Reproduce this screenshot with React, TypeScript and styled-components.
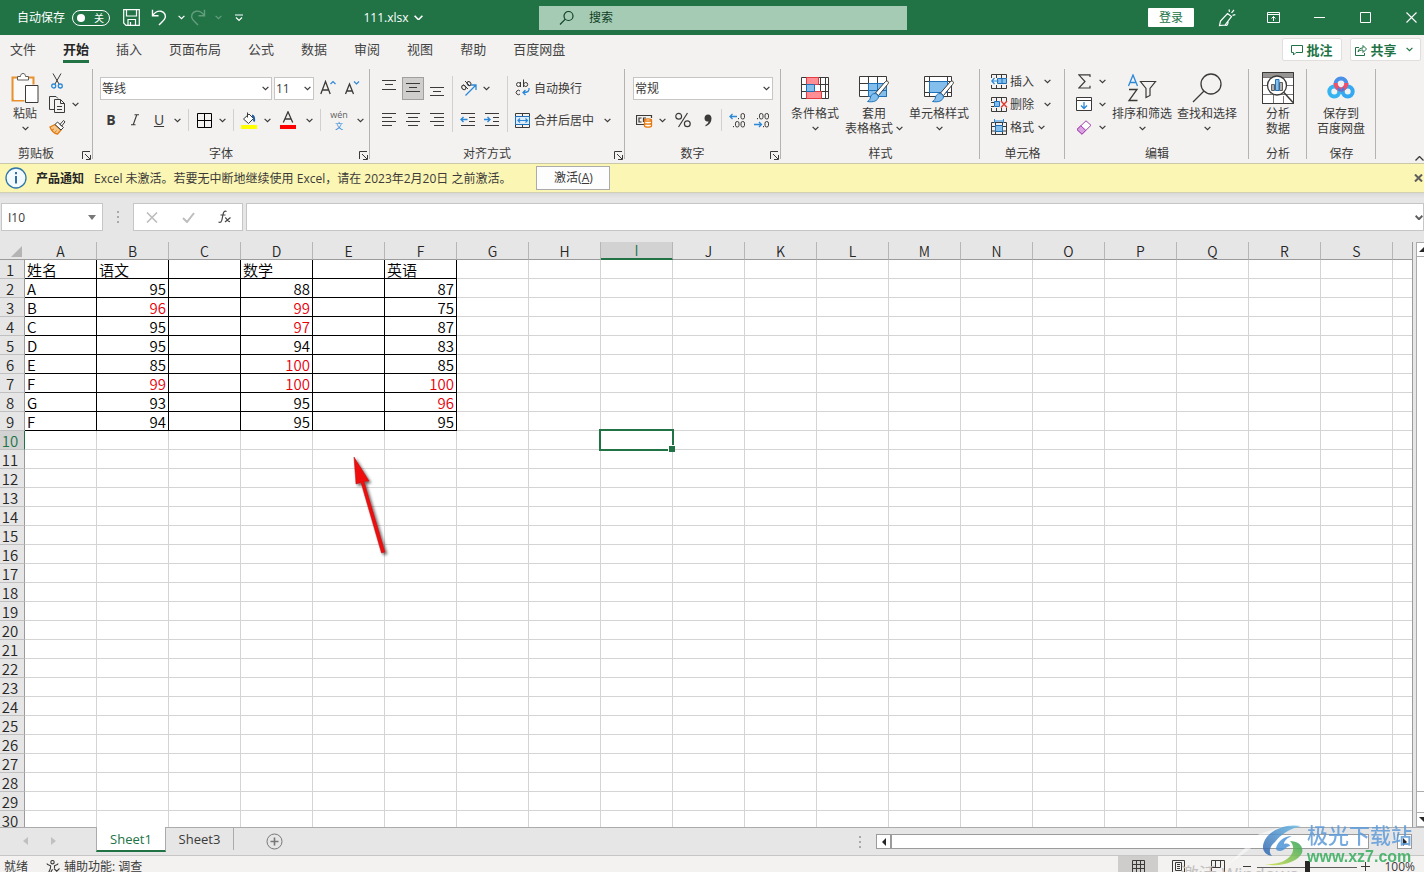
import React from "react";
import styled, { createGlobalStyle, css } from "styled-components";

const UI = `"Open Sans", "Noto Sans CJK SC", sans-serif`;
const GRID = `"Noto Sans CJK SC", sans-serif`;
const INK = "#3b3a39";
const GREEN = "#217346";
const BLUE = "#2b88d8";

const GlobalStyle = createGlobalStyle`
  * { box-sizing: border-box; }
  body { margin: 0; overflow: hidden; background: #e6e6e6; }
  button, input, select { font: inherit; color: inherit; margin: 0; padding: 0; }
  button { background: none; border: 0; cursor: pointer; }
`;

/* ---------- shell ---------- */
const Shell = styled.div`
  position: relative;
  display: flex;
  flex-direction: column;
  height: 100vh;
  overflow: hidden;
  font: 12px/16px ${UI};
  color: ${INK};
`;

const TitleBar = styled.header`
  display: flex;
  align-items: center;
  height: 35px;
  flex: none;
  background: ${GREEN};
  color: #fff;
`;
const TitleLeft = styled.div`
  display: flex;
  align-items: center;
  flex: 1 1 539px;
  padding-left: 17px;
`;
const AutoSave = styled.label`
  display: flex;
  align-items: center;
  gap: 7px;
`;
const ToggleShell = styled.span`
  display: flex;
  align-items: center;
  justify-content: space-between;
  width: 38px;
  height: 16px;
  padding: 0 5px 0 4px;
  border: 1px solid #fff;
  border-radius: 8px;
  font-size: 10px;
  line-height: 14px;
`;
const ToggleDot = styled.input`
  appearance: none;
  width: 8px;
  height: 8px;
  border-radius: 50%;
  background: #fff;
`;
const QuickTools = styled.div`
  display: flex;
  align-items: center;
  padding-left: 10px;
`;
const BarButton = styled.button<{ $w?: number; $dim?: boolean }>`
  display: flex;
  align-items: center;
  justify-content: center;
  flex: none;
  width: ${(p) => p.$w ?? 22}px;
  height: 24px;
  opacity: ${(p) => (p.$dim ? 0.3 : 1)};
`;
const FileName = styled.button`
  display: flex;
  align-items: center;
  gap: 5px;
  margin: 0 auto;
  padding-right: 5px;
`;
const SearchBox = styled.label`
  display: flex;
  align-items: center;
  gap: 14px;
  flex: 0 1 368px;
  height: 24px;
  padding-left: 20px;
  background: #a6cbb5;
  color: #0f4024;
`;
const SearchInput = styled.input`
  flex: 1;
  min-width: 0;
  border: 0;
  outline: 0;
  background: none;
  &::placeholder { color: #0f4024; opacity: 1; }
`;
const TitleRight = styled.div`
  display: flex;
  align-items: center;
  justify-content: flex-end;
  flex: 1 1 517px;
`;
const SignIn = styled.button`
  flex: none;
  width: 46px;
  height: 19px;
  margin-right: 10px;
  border-radius: 1px;
  background: #fff;
  color: ${GREEN};
`;
const CloseWindow = styled(BarButton)`
  width: 46px;
  margin-right: -10px;
`;

/* ---------- tabs ---------- */
const TabBar = styled.nav`
  display: flex;
  align-items: center;
  height: 29px;
  flex: none;
  padding: 0 3px 0 10px;
  background: #f3f2f1;
  font-size: 13px;
`;
const Tab = styled.button<{ $on?: boolean }>`
  height: 26px;
  margin-right: 27px;
  padding-top: 2px;
  border-bottom: 3px solid ${(p) => (p.$on ? GREEN : "transparent")};
  font-weight: ${(p) => (p.$on ? 700 : 400)};
  color: ${(p) => (p.$on ? "#262626" : "#444")};
  white-space: nowrap;
`;
const TabActions = styled.div`
  display: flex;
  gap: 8px;
  margin-left: auto;
`;
const ActionButton = styled.button<{ $w: number }>`
  display: flex;
  align-items: center;
  justify-content: center;
  gap: 3px;
  width: ${(p) => p.$w}px;
  height: 23px;
  background: #fff;
  border: 1px solid #e1dfdd;
  border-radius: 2px;
  color: ${GREEN};
  font-weight: 700;
  white-space: nowrap;
`;

/* ---------- ribbon ---------- */
const Ribbon = styled.section`
  position: relative;
  display: flex;
  height: 100px;
  flex: none;
  background: #f3f2f1;
  border-bottom: 1px solid #c9c9a8;
`;
const Group = styled.div<{ $w: number }>`
  display: flex;
  flex-direction: column;
  flex: none;
  width: ${(p) => p.$w}px;
  background: linear-gradient(#b5b3b1, #b5b3b1) right 5px / 1px 90px no-repeat;
`;
const GroupBody = styled.div<{ $pad: number }>`
  display: flex;
  align-items: center;
  height: 80px;
  padding-left: ${(p) => p.$pad}px;
`;
const GroupFoot = styled.div`
  display: flex;
  align-items: center;
  height: 18px;
`;
const GroupName = styled.span`
  flex: 1;
  padding-top: 2px;
  text-align: center;
`;
const Launcher = styled.button`
  width: 21px;
  height: 18px;
  padding: 4px 0 0 7px;
  display: block;
`;
const Stack = styled.div`
  display: flex;
  flex-direction: column;
`;
const Line = styled.div<{ $h?: number; $pad?: number }>`
  display: flex;
  align-items: center;
  height: ${(p) => p.$h ?? 32}px;
  padding-left: ${(p) => p.$pad ?? 0}px;
`;
const AlignGrid = styled.div`
  display: grid;
  grid-template-columns: repeat(3, 24px);
  grid-auto-rows: 32px;
  align-items: center;
`;
const Tool = styled.button<{ $on?: boolean; $w?: number }>`
  display: flex;
  align-items: center;
  justify-content: center;
  flex: none;
  width: ${(p) => p.$w ?? 24}px;
  height: 24px;
  font-size: 14px;
  ${(p) =>
    p.$on &&
    css`
      width: 22px;
      height: 23px;
      margin: 0 1px;
      background: #d0cecc;
      border: 1px solid #a19f9d;
    `}
`;
const Drop = styled.button<{ $gap?: number }>`
  display: flex;
  align-items: center;
  justify-content: center;
  flex: none;
  width: 12px;
  height: 20px;
  margin-left: ${(p) => p.$gap ?? 0}px;
`;
const Rule = styled.i<{ $h?: number; $l?: number }>`
  flex: none;
  width: 1px;
  height: ${(p) => p.$h ?? 22}px;
  margin: 0 3px 0 ${(p) => p.$l ?? 5}px;
  background: #d2d0ce;
`;
const SelectBox = styled.span<{ $w: number; $gap?: number }>`
  display: flex;
  align-items: center;
  width: ${(p) => p.$w}px;
  height: 23px;
  margin-right: ${(p) => p.$gap ?? 0}px;
  padding: 1px 2px 0 1px;
  background: #fff;
  border: 1px solid #c8c6c4;
`;
const NativeSelect = styled.select`
  appearance: none;
  flex: 1;
  min-width: 0;
  border: 0;
  outline: 0;
  background: none;
`;
const LabelTool = styled.button<{ $gap?: number }>`
  display: flex;
  align-items: center;
  gap: ${(p) => p.$gap ?? 3}px;
  height: 23px;
  white-space: nowrap;
`;
const ToolText = styled.span`
  padding-top: 2px;
`;
const BigTool = styled.button<{ $w: number }>`
  display: flex;
  flex-direction: column;
  align-items: center;
  flex: none;
  width: ${(p) => p.$w}px;
  height: 64px;
  line-height: 15px;
  white-space: nowrap;
`;
const BigIcon = styled.span`
  display: flex;
  align-items: center;
  justify-content: center;
  height: 32px;
  margin-bottom: 2px;
`;
const BigLine = styled.span`
  display: flex;
  align-items: center;
  gap: 3px;
  height: 15px;
`;
const Collapse = styled.button`
  margin-left: auto;
  align-self: flex-end;
  width: 9px;
  height: 14px;
  overflow: hidden;
`;
const PinyinMark = styled.span`
  display: flex;
  flex-direction: column;
  align-items: center;
  font-size: 9px;
  line-height: 11px;
  color: #605e5c;
`;
const PinyinHan = styled.span`
  font-size: 8px;
  font-family: ${GRID};
  color: ${BLUE};
`;

/* ---------- notice ---------- */
const Notice = styled.div`
  display: flex;
  align-items: center;
  height: 29px;
  flex: none;
  padding-left: 5px;
  background: #fbf6b4;
  border-bottom: 1px solid #d3d1b4;
  white-space: nowrap;
`;
const NoticeTitle = styled.strong`
  margin: 0 10px 0 9px;
  padding-top: 1px;
  color: #262626;
`;
const NoticeText = styled.span`
  padding-top: 1px;
`;
const Activate = styled.button`
  width: 74px;
  height: 24px;
  margin-left: 25px;
  background: #fdfdfd;
  border: 1px solid #ababab;
`;
const NoticeClose = styled.button`
  display: flex;
  margin-left: auto;
  padding-right: 1px;
`;

/* ---------- formula row ---------- */
const FormulaRow = styled.div`
  display: flex;
  flex: none;
  height: 49px;
  padding: 10px 0 0 1px;
  background: linear-gradient(#d8d8d8, #e6e6e6 5px);
`;
const Field = styled.div<{ $w?: number }>`
  display: flex;
  align-items: center;
  ${(p) => (p.$w ? `width: ${p.$w}px;` : "flex: 1; min-width: 0;")}
  height: 28px;
  background: #fff;
  border: 1px solid #c6c6c6;
`;
const FieldInput = styled.input`
  flex: 1;
  min-width: 0;
  height: 24px;
  padding-left: 6px;
  border: 0;
  outline: 0;
  background: none;
`;
const FieldButton = styled.button<{ $w: number }>`
  display: flex;
  align-items: center;
  justify-content: center;
  width: ${(p) => p.$w}px;
  height: 26px;
`;
const Grip = styled.span<{ $w: number }>`
  display: flex;
  align-items: center;
  justify-content: center;
  width: ${(p) => p.$w}px;
  height: 28px;
`;

/* ---------- grid ---------- */
const Work = styled.main`
  position: relative;
  display: flex;
  flex: 1;
  min-height: 0;
`;
const SheetArea = styled.div`
  flex: 1;
  min-width: 0;
  overflow: hidden;
  border-right: 1px solid #9b9b9b;
  background: #fff;
`;
const Sheet = styled.table`
  width: 100%;
  table-layout: fixed;
  border-collapse: separate;
  border-spacing: 0;
  font: 15px/16px ${GRID};
  font-weight: 350;
  color: #000;
  th:last-child,
  td:last-child {
    border-right: 0;
  }
`;
const Corner = styled.td`
  height: 18px;
  padding: 0;
  background: #e6e6e6;
  border-bottom: 1px solid #9b9b9b;
  vertical-align: bottom;
  text-align: right;
  line-height: 0;
`;
const ColHead = styled.th<{ $on?: boolean }>`
  height: 18px;
  padding: 1px 0 0;
  font-weight: inherit;
  font-size: 14px;
  line-height: 15px;
  background: ${(p) => (p.$on ? "#d2d2d2" : "#e6e6e6")};
  color: ${(p) => (p.$on ? GREEN : "#262626")};
  border-right: 1px solid #b6b6b6;
  border-bottom: ${(p) => (p.$on ? `2px solid ${GREEN}` : "1px solid #9b9b9b")};
`;
const RowHead = styled.th<{ $on?: boolean }>`
  height: 19px;
  padding: 2px 4px 0 0;
  text-align: center;
  font-weight: inherit;
  background: ${(p) => (p.$on ? "#d2d2d2" : "#e6e6e6")};
  color: ${(p) => (p.$on ? GREEN : "#262626")};
  border-right: 1px solid ${(p) => (p.$on ? GREEN : "#9b9b9b")};
  border-bottom: 1px solid #c0c0c0;
`;
const Cell = styled.td<{ $box?: boolean; $num?: boolean; $hot?: boolean }>`
  position: relative;
  height: 19px;
  padding: 2px 2px 0;
  text-align: ${(p) => (p.$num ? "right" : "left")};
  color: ${(p) => (p.$hot ? "#e8000b" : "#000")};
  border-right: 1px solid ${(p) => (p.$box ? "#000" : "#d4d4d4")};
  border-bottom: 1px solid ${(p) => (p.$box ? "#000" : "#d4d4d4")};
  white-space: nowrap;
`;
const Selection = styled.div`
  position: absolute;
  inset: -2px;
  z-index: 1;
  border: 2px solid ${GREEN};
  &::after {
    content: "";
    position: absolute;
    right: -3px;
    bottom: -3px;
    width: 6px;
    height: 6px;
    background: ${GREEN};
    border: solid #fff;
    border-width: 1px 0 0 1px;
  }
`;
const VScroll = styled.div`
  display: flex;
  flex-direction: column;
  width: 8px;
  margin-left: 3px;
  border-left: 1px solid #ababab;
  background: #fff;
`;
const VArrow = styled.button`
  display: flex;
  align-items: center;
  justify-content: flex-end;
  height: 15px;
  overflow: hidden;
  background: #fff;
  border-top: 1px solid #ababab;
  border-bottom: 1px solid #ababab;
`;
const VTrack = styled.div`
  flex: 1;
  margin-bottom: 20px;
  border-bottom: 1px solid #ababab;
`;
const Arrow = styled.svg`
  position: absolute;
  left: 346px;
  top: 211px;
  pointer-events: none;
`;

/* ---------- bottom bars ---------- */
const SheetBar = styled.div`
  display: flex;
  align-items: flex-start;
  height: 28px;
  flex: none;
  background: #e6e6e6;
  border-top: 1px solid #ababab;
  font-size: 13px;
`;
const NavArrows = styled.div`
  display: flex;
  justify-content: center;
  gap: 22px;
  width: 96px;
  padding: 9px 16px 0 0;
`;
const SheetTab = styled.button<{ $on?: boolean }>`
  width: ${(p) => (p.$on ? 70 : 68)}px;
  height: ${(p) => (p.$on ? 25 : 22)}px;
  margin-top: ${(p) => (p.$on ? -1 : 0)}px;
  border-right: 1px solid #ababab;
  ${(p) =>
    p.$on &&
    css`
      background: #fff;
      color: ${GREEN};
      border-left: 1px solid #ababab;
      border-bottom: 2px solid ${GREEN};
    `}
`;
const AddSheet = styled.button`
  display: flex;
  margin: 5px 0 0 32px;
`;
const HScroll = styled.div`
  display: flex;
  justify-content: space-between;
  width: 536px;
  height: 15px;
  margin: 6px 12px 0 15px;
`;
const BarGrip = styled.div`
  margin: 7px 0 0 auto;
`;
const HBox = styled.button<{ $w: number }>`
  display: flex;
  align-items: center;
  justify-content: center;
  width: ${(p) => p.$w}px;
  height: 15px;
  background: #fff;
  border: 1px solid #9b9b9b;
`;
const HThumb = styled.div`
  flex: 1;
  margin: 0 28px 0 0;
  background: #fff;
  border: 1px solid #9b9b9b;
`;
const StatusBar = styled.footer`
  position: relative;
  display: flex;
  align-items: flex-start;
  height: 17px;
  flex: none;
  padding: 0 9px 0 4px;
  background: #f3f2f1;
  border-top: 1px solid #c8c6c4;
  line-height: 22px;
  white-space: nowrap;
`;
const A11y = styled.button`
  display: flex;
  align-items: center;
  gap: 3px;
  height: 22px;
  margin-left: 18px;
`;
const ViewButton = styled.button<{ $on?: boolean }>`
  display: flex;
  align-items: center;
  justify-content: center;
  width: 40px;
  height: 20px;
  background: ${(p) => (p.$on ? "#cfcdcb" : "none")};
`;
const Views = styled.div`
  display: flex;
  margin-left: auto;
`;
const ZoomPart = styled.div`
  position: relative;
  z-index: 3;
  display: flex;
  align-items: center;
  height: 22px;
  margin-left: 5px;
`;
const Range = styled.input`
  appearance: none;
  width: 100px;
  height: 12px;
  margin: 0 4px 0 5px;
  background: linear-gradient(#605e5c, #605e5c) center / 100% 1px no-repeat;
  &::-webkit-slider-thumb {
    appearance: none;
    width: 5px;
    height: 12px;
    background: #262626;
  }
`;
const ZoomText = styled.button`
  width: 34px;
  margin-left: 11px;
  text-align: right;
`;
const OsMark = styled.div`
  position: absolute;
  top: 6px;
  right: 126px;
  font-size: 18px;
  line-height: 24px;
  color: #c2c0be;
`;
const SiteMark = styled.div`
  position: absolute;
  right: 11px;
  bottom: 6px;
  z-index: 5;
  display: flex;
  align-items: center;
  opacity: 0.85;
  pointer-events: none;
`;
const SiteText = styled.div`
  display: flex;
  flex-direction: column;
  width: 106px;
  font-family: "Liberation Sans", "Noto Sans CJK SC", sans-serif;
  white-space: nowrap;
`;
const SiteName = styled.span`
  font-size: 21px;
  line-height: 24px;
  font-weight: 500;
  color: #5f9bd8;
`;
const SiteUrl = styled.span`
  font-size: 16px;
  line-height: 17px;
  color: #35ad5c;
  font-weight: 700;
`;

/* ---------- icons ---------- */
type IconProps = { w: number; h: number; children: React.ReactNode; c?: string; sw?: number };
const IconSvg = styled.svg`
  flex: none;
`;
const Ico = ({ w, h, children, c = INK, sw = 1 }: IconProps) => (
  <IconSvg width={w} height={h} viewBox={`0 0 ${w} ${h}`} fill="none" stroke={c} strokeWidth={sw} aria-hidden="true">
    {children}
  </IconSvg>
);
const Chevron = ({ w = 7, c = INK, sw = 1.2 }: { w?: number; c?: string; sw?: number }) => (
  <Ico w={w} h={5} c={c} sw={sw}>
    <path d={`M.6 .8 L${w / 2} ${w / 2 + 0.2} L${w - 0.6} .8`} />
  </Ico>
);
const Bars = ({ rows }: { rows: [number, number, number][] }) => (
  <Ico w={16} h={18}>
    {rows.map(([a, b, y]) => (
      <path key={y} d={`M${a} ${y}.5H${b}`} />
    ))}
  </Ico>
);
const Pointer = ({ d, c = "#262626", w = 6, h = 8 }: { d: string; c?: string; w?: number; h?: number }) => (
  <Ico w={w} h={h} c="none">
    <path d={d} fill={c} />
  </Ico>
);
const Brush = () => (
  <>
    <path d="M30 8.500c.8.8.4 2-.5 3L20.500 22.500l-3-2.500L27 9c1-1 2-1.300 3-.5z" fill="#fff" stroke={INK} />
    <path d="M17 20.500c2 .5 3.500 2 3.500 3.500-1 4-5 5.500-11 4.500 2.500-1.500 2.500-2.500 3.200-5 .8-2 2.300-3 4.300-3z" fill="#83beec" stroke="#1e70b8" />
  </>
);
const Dots = () => (
  <Ico w={2} h={12} c="none">
    <path d="M0 0h2v2H0zM0 5h2v2H0zM0 10h2v2H0z" fill="#a8a8a8" />
  </Ico>
);
const Launch = () => (
  <Ico w={9} h={9}>
    <path d="M8 .5H.5V8M3 3l5 5M8.500 4v4.500H4" />
  </Ico>
);

const SaveIcon = () => (
  <Ico w={17} h={17} c="#fff" sw={1.2}>
    <path d="M.7.7h15.600v15.600H3L.7 14zM3.500.7V7h10V.7M5 16.300v-5.800h7.500v5.800M7.500 16v-3" />
  </Ico>
);
const UndoIcon = () => (
  <Ico w={16} h={17} c="#fff" sw={1.4}>
    <path d="M1.500.8v6h6M1.700 6.600C4 3 7 1.700 10 2.200c4 .8 5.500 5 3.500 8-.8 1.200-3.500 3.800-5.500 5.800" />
  </Ico>
);
const RedoIcon = () => (
  <Ico w={16} h={17} c="#fff" sw={1.4}>
    <path d="M14.500.8v6h-6M14.300 6.600C12 3 9 1.700 6 2.200c-4 .8-5.500 5-3.500 8 .8 1.200 3.500 3.800 5.500 5.800" />
  </Ico>
);
const PasteIcon = () => (
  <Ico w={28} h={31}>
    <path d="M6.500 4.500h-5v23h12M18 4.500h4.500v7" stroke="#e8912d" strokeWidth="2" />
    <path d="M3 6h18v21H3z" fill="#fbfaf9" stroke="none" />
    <path d="M6.500 7V3.500h3C9.500 1.500 10.500.5 12 .5s2.500 1 2.500 3h3V7z" fill="#fff" stroke="#605e5c" />
    <path d="M14.500 12.500h12.500v17H14.500z" fill="#fff" />
  </Ico>
);
const CutIcon = () => (
  <Ico w={12} h={16}>
    <path d="M2 .5l6 10.500M10 .5L4 11" />
    <circle cx="2.700" cy="13" r="2" stroke={BLUE} strokeWidth="1.300" />
    <circle cx="9.300" cy="13" r="2" stroke={BLUE} strokeWidth="1.300" />
  </Ico>
);
const CopyIcon = () => (
  <Ico w={17} h={17}>
    <path d="M5 13.500H.5V.5H7l2 2M5.500 3.500h6l4 4v9h-10zM11.500 3.500v4h4M8 10.500h5M8 13.500h5" />
  </Ico>
);
const PainterIcon = () => (
  <Ico w={17} h={16}>
    <path d="M1 8l5-2.500 6 5.500-3.500 4C5 14.500 2.500 12 1 8z" fill="#f6c78b" stroke="#e07b14" strokeWidth="1.300" />
    <path d="M5 10l-2 1M7.500 11.500L6 13.500" stroke="#e07b14" />
    <path d="M6 5.500L8.500 3l6 5.500-2.500 2.500zM11 5.500l3.500-4 1.500 1.300L12.700 7z" fill="#fff" />
  </Ico>
);
const BorderIcon = () => (
  <Ico w={15} h={15} c="#000">
    <path d="M.5.5h14v14H.5zM7.500.5v14M.5 7.500h14" />
  </Ico>
);
const FillIcon = () => (
  <Ico w={16} h={17}>
    <path d="M6.500.5v5M2.500 7l5.500-5 4.500 4.500L7.500 11.500z" fill="#fff" />
    <path d="M11 3.500c2 .5 2.500 2.500 2 6" stroke="#1e5fa8" strokeWidth="2" />
    <path d="M0 13h16v4H0z" fill="#ffff00" stroke="none" />
  </Ico>
);
const FontColor = () => (
  <Ico w={16} h={18}>
    <path d="M3.300 11.500L8 .8l4.700 10.700M4.800 8h6.400" strokeWidth="1.300" />
    <path d="M0 14h16v4H0z" fill="#ff0000" stroke="none" />
  </Ico>
);
const SizeIcon = ({ up }: { up?: boolean }) => (
  <Ico w={16} h={16}>
    <path d={up ? "M.8 14L5.500 1.500 10.200 14M2.300 10h6.400" : "M1.500 14L5.500 4l4 10M2.800 11h5.400"} strokeWidth="1.300" />
    <path d={up ? "M10.500 4L13 1.500 15.500 4" : "M10 1.500L12.500 4 15 1.500"} stroke={BLUE} strokeWidth="1.200" />
  </Ico>
);
const OrientIcon = () => (
  <Ico w={17} h={16}>
    <ellipse cx="3.800" cy="7.500" rx="1.800" ry="2.300" transform="rotate(-45 3.800 7.500)" />
    <path d="M3.500 4.500l4.500 4.500M5 1l5 5" />
    <ellipse cx="9" cy="3.600" rx="1.700" ry="2.200" transform="rotate(-45 9 3.600)" />
    <path d="M5.500 15.500L15.500 5.500M11 5h5v5" stroke={BLUE} strokeWidth="1.300" />
  </Ico>
);
const IndentIcon = ({ out }: { out?: boolean }) => (
  <Ico w={16} h={14}>
    <path d="M1 .5h14M9 4.500h6M9 8.500h6M1 12.500h14" />
    <path d={out ? "M7.500 6.500H1M3.500 4L1 6.500 3.500 9" : "M0 6.500h6M3.500 4L6 6.500 3.500 9"} stroke={BLUE} strokeWidth="1.400" />
  </Ico>
);
const WrapIcon = () => (
  <Ico w={16} h={18}>
    <circle cx="3.500" cy="5.500" r="2" />
    <path d="M5.500 3v5M8.500.5V8M5 12a2.200 2.200 0 1 0 0 3" />
    <circle cx="10.700" cy="5.500" r="2" />
    <path d="M14 9c.5 3-1 4.500-6 4.500M10.500 11L8 13.500l2.500 2.500" stroke={BLUE} strokeWidth="1.300" />
  </Ico>
);
const MergeIcon = () => (
  <Ico w={16} h={15}>
    <path d="M.5.5h14v14H.5zM7.500.5v3M7.500 11.500v3" />
    <path d="M.5 3.500h14v8H.5z" fill="#deecf9" stroke="#1e70b8" />
    <path d="M3 7.500h9.500M5 5.500L3 7.500l2 2M10.500 5.500l2 2-2 2" stroke={BLUE} strokeWidth="1.200" />
  </Ico>
);
const CurrencyIcon = () => (
  <Ico w={17} h={15}>
    <path d="M8 11.500H.5v-9h15V5M5.500 5H3v4h2.500M7.500 9V5H10" strokeWidth="1.200" />
    <path d="M8.500 7c0-1.500 7-1.500 7 0v6c0 1.500-7 1.500-7 0zM8.500 7c0 1.500 7 1.500 7 0M8.500 10c0 1.500 7 1.500 7 0" fill="#fff" stroke="#e8780c" strokeWidth="1.300" />
  </Ico>
);
const PercentIcon = () => (
  <Ico w={16} h={16} sw={1.2}>
    <circle cx="3.700" cy="4.200" r="2.900" />
    <circle cx="12.300" cy="11.800" r="2.900" />
    <path d="M12.500 1L3.500 15" />
  </Ico>
);
const CommaIcon = () => (
  <Ico w={8} h={13} c="none">
    <path d="M4 .5c2.500 0 3.500 2 3.500 4C7.500 8 5.500 11 1.500 12.500V11C3.500 10 4.500 8.800 4.500 7.300 2 8 .5 6.500.5 4.200.5 2 2 .5 4 .5z" fill={INK} />
  </Ico>
);
const DecimalIcon = ({ more }: { more?: boolean }) => (
  <Ico w={17} h={16}>
    {more ? (
      <>
        <path d="M8 4.500H1M3.500 2L1 4.500 3.500 7" stroke={BLUE} strokeWidth="1.300" />
        <path d="M9.500 6v1.200M4.500 14v1.200" />
        <rect x="12" y="1.500" width="3.500" height="5.500" rx="1.700" />
        <rect x="6.500" y="9.500" width="3.500" height="5.500" rx="1.700" />
        <rect x="12" y="9.500" width="3.500" height="5.500" rx="1.700" />
      </>
    ) : (
      <>
        <path d="M1 12.500h7.500M6 10l2.500 2.500L6 15" stroke={BLUE} strokeWidth="1.300" />
        <path d="M4.500 6v1.200M10.500 14v1.200" />
        <rect x="6.500" y="1.500" width="3.500" height="5.500" rx="1.700" />
        <rect x="12" y="1.500" width="3.500" height="5.500" rx="1.700" />
        <rect x="12" y="9.500" width="3.500" height="5.500" rx="1.700" />
      </>
    )}
  </Ico>
);
const CondIcon = () => (
  <Ico w={30} h={24}>
    <path d="M1.500 1.500h27v21h-27zM6.500 1.500v21M20.500 1.500v21M25.500 1.500v21M1.500 8.500h27M1.500 15.500h27" fill="#fff" />
    <path d="M6.500 1.500h12v7h-12zM6.500 15.500h15v7h-15z" fill="#ff8f94" stroke="#e23b41" />
    <path d="M6.500 8.500h8v7h-8z" fill="#83beec" stroke="#1e70b8" />
  </Ico>
);
const TableStyleIcon = () => (
  <Ico w={32} h={30}>
    <path d="M1.500 3.500h27v20h-27zM10.500 3.500v20M19.500 3.500v20M1.500 10.500h27M1.500 17.500h27" fill="#fff" />
    <path d="M10.500 10.500h18v13h-18z" fill="#83beec" stroke="#1e70b8" />
    <path d="M19.500 10.500v13M10.500 17.500h18" stroke="#1e70b8" />
    <Brush />
  </Ico>
);
const CellStyleIcon = () => (
  <Ico w={32} h={30}>
    <path d="M1.500 3.500h27v20h-27zM6.500 3.500v20M24.500 3.500v20M1.500 8.500h27M1.500 19.500h27" fill="#fff" />
    <path d="M6.500 8.500h18v11h-18z" fill="#83beec" stroke="#1e70b8" />
    <Brush />
  </Ico>
);
const InsertCells = () => (
  <Ico w={17} h={15}>
    <path d="M.5 4V.5h15V4M.5 11v3.500h15V11M5.500.5V4M10.500.5V4M5.500 11v3.500M10.500 11v3.500" />
    <path d="M6.500 4.500h9v5h-9z" fill="#83beec" stroke="#1e70b8" />
    <path d="M11 4.500v5" stroke="#1e70b8" />
    <path d="M7.500 7H.8M3.500 4L.8 7l2.700 3" stroke={BLUE} strokeWidth="1.200" />
  </Ico>
);
const DeleteCells = () => (
  <Ico w={17} h={15}>
    <path d="M.5 4V.5h15V4M.5 11v3.500h15V11M5.500.5V4M10.500.5V4M5.500 11v3.500M10.500 11v3.500M0 5.500h3M0 9.500h3" />
    <path d="M3.500 4.500h5v5h-5z" fill="#83beec" stroke="#1e70b8" />
    <path d="M10 4l6 6.500M16 4l-6 6.500" stroke="#e03c31" strokeWidth="1.400" />
  </Ico>
);
const FormatCells = () => (
  <Ico w={17} h={16}>
    <path d="M.5 3.500h15v12H.5zM4.500 3.500v12M11.500 3.500v12M.5 7.500h15M.5 12h15" />
    <path d="M4.500 6.500h7v6h-7z" fill="#83beec" stroke="#1e70b8" />
    <path d="M3.500 2h9M3.500 0v4M12.500 0v4" stroke={BLUE} />
  </Ico>
);
const SumIcon = () => (
  <Ico w={13} h={15} sw={1.2}>
    <path d="M12 3V.8H.8L7 7.500.8 14H12v-2.200" />
  </Ico>
);
const FillDown = () => (
  <Ico w={16} h={14}>
    <path d="M.5.5h15v13H.5zM.5 3.500h15" fill="#fff" />
    <path d="M8 5v6.500M5 8.500l3 3 3-3" stroke={BLUE} strokeWidth="1.300" />
  </Ico>
);
const Eraser = () => (
  <Ico w={16} h={15} c="#a33fb0">
    <path d="M1 9.500L10 .8l5 4.500-9 8.900z" fill="#fff" />
    <path d="M1 9.500L4.800 5.800l5 4.500L6 14.200z" fill="#d9a3e0" />
  </Ico>
);
const SortIcon = () => (
  <Ico w={30} h={28}>
    <path d="M1.500 12L6 1l4.500 11M3 8.500h6" stroke={BLUE} strokeWidth="1.300" />
    <path d="M2 15.500h8L2 26.500h8.500" strokeWidth="1.300" />
    <path d="M13.500 7.500h15l-5.500 7v7l-4 2v-9z" strokeWidth="1.200" />
  </Ico>
);
const FindIcon = () => (
  <Ico w={30} h={30} sw={1.3}>
    <circle cx="19" cy="11" r="10" />
    <path d="M12 18L1 29" />
  </Ico>
);
const AnalyzeIcon = () => (
  <Ico w={32} h={32}>
    <path d="M.5.5h31v31H.5z" fill="#fff" />
    <path d="M1 1h30v4H1z" fill="#979593" stroke="none" />
    <path d="M.5 5.500h31M.5 13.500h31M.5 22.500h31M11.500 22v9.500M21.500 24v7.500" stroke="#797775" />
    <path d="M.5.5h31v31H.5z" />
    <circle cx="15" cy="13.500" r="9.500" fill="#fff" strokeWidth="1.300" />
    <path d="M22 20.500l9 10" strokeWidth="1.500" />
    <path d="M9.500 12.500h3v6h-3zM17.500 10.500h3v8h-3z" fill="#b3b0ad" stroke="#605e5c" />
    <path d="M13.500 7.500h3.500v11h-3.500z" fill="#83beec" stroke="#1e70b8" />
  </Ico>
);
const CloudDisk = () => (
  <Ico w={28} h={24} sw={4}>
    <circle cx="14" cy="8" r="5.500" stroke="#4a8fe8" />
    <circle cx="7.300" cy="15.500" r="5" stroke="#35b4f0" />
    <circle cx="20.700" cy="15.500" r="5" stroke="#35a8f2" />
    <path d="M8.600 7c0 3.500 2.400 6.500 5.400 6.500s5.400-3 5.400-6.500" stroke="#f0506a" />
    <path d="M11 12l2.500 3M17 12l-2.500 3" stroke="#3b82e8" strokeWidth="2" />
  </Ico>
);
const InfoIcon = () => (
  <Ico w={22} h={22} c="#2e75a8" sw={1.3}>
    <circle cx="11" cy="11" r="10" fill="#f2f9ff" />
    <path d="M11 9v7.500M11 5v2.200" stroke="#1e5f96" strokeWidth="1.800" />
  </Ico>
);
const A11yIcon = () => (
  <Ico w={15} h={15} sw={1.1}>
    <circle cx="6.500" cy="2.200" r="1.700" />
    <path d="M1 3.500c0 1 2 1.700 3.500 2.200.5 2.300-.5 4.500-2 7l1.500 1 2.500-4.500M12 3.500c0 1-2 1.700-3.500 2.200V8M8 8.500l5.500 5.500M13.500 8.500L8 14" />
  </Ico>
);

/* ---------- data ---------- */
const COLS = "ABCDEFGHIJKLMNOPQRS".split("");
const DATA: (string | number)[][] = [
  ["姓名", "语文", "", "数学", "", "英语"],
  ["A", 95, "", 88, "", 87],
  ["B", 96, "", 99, "", 75],
  ["C", 95, "", 97, "", 87],
  ["D", 95, "", 94, "", 83],
  ["E", 85, "", 100, "", 85],
  ["F", 99, "", 100, "", 100],
  ["G", 93, "", 95, "", 96],
  ["F", 94, "", 95, "", 95],
];
const TABS = ["文件", "开始", "插入", "页面布局", "公式", "数据", "审阅", "视图", "帮助", "百度网盘"];

const RibbonGroup = ({ name, w, pad, launch, children }: { name: string; w: number; pad: number; launch?: boolean; children: React.ReactNode }) => (
  <Group $w={w}>
    <GroupBody $pad={pad}>{children}</GroupBody>
    <GroupFoot>
      <GroupName>{name}</GroupName>
      {launch && (
        <Launcher aria-label={`${name}设置`}>
          <Launch />
        </Launcher>
      )}
    </GroupFoot>
  </Group>
);
const DropDown = ({ gap }: { gap?: number }) => (
  <Drop $gap={gap} aria-label="更多">
    <Chevron />
  </Drop>
);
const Picker = ({ w, value, label, gap }: { w: number; value: string; label: string; gap?: number }) => (
  <SelectBox $w={w} $gap={gap}>
    <NativeSelect aria-label={label} defaultValue={value}>
      <option>{value}</option>
    </NativeSelect>
    <Chevron />
  </SelectBox>
);
const Big = ({ w, icon, top, bottom, drop }: { w: number; icon: React.ReactNode; top: string; bottom?: string; drop?: boolean }) => (
  <BigTool $w={w}>
    <BigIcon>{icon}</BigIcon>
    <BigLine>{top}</BigLine>
    <BigLine>
      {bottom}
      {drop && <Chevron />}
    </BigLine>
  </BigTool>
);

export default function App() {
  return (
    <Shell>
      <GlobalStyle />
      <TitleBar>
        <TitleLeft>
          <AutoSave>
            自动保存
            <ToggleShell>
              <ToggleDot type="checkbox" />关
            </ToggleShell>
          </AutoSave>
          <QuickTools>
            <BarButton aria-label="保存"><SaveIcon /></BarButton>
            <BarButton aria-label="撤消" $w={34}><UndoIcon /></BarButton>
            <BarButton aria-label="撤消选项" $w={10}><Chevron c="#fff" /></BarButton>
            <BarButton aria-label="恢复" $w={24} $dim><RedoIcon /></BarButton>
            <BarButton aria-label="恢复选项" $w={16} $dim><Chevron c="#fff" /></BarButton>
            <BarButton aria-label="自定义快速访问工具栏" $w={26}>
              <Ico w={8} h={8} c="#fff" sw={1.2}><path d="M0 1h8M1 3.500l3 3 3-3" /></Ico>
            </BarButton>
          </QuickTools>
          <FileName>111.xlsx <Chevron w={9} c="#fff" sw={1.6} /></FileName>
        </TitleLeft>
        <SearchBox>
          <Ico w={16} h={16} c="#0f4024" sw={1.2}><circle cx="9.500" cy="6" r="4.500" /><path d="M6.300 9.200L1 14.500" /></Ico>
          <SearchInput placeholder="搜索" aria-label="搜索" />
        </SearchBox>
        <TitleRight>
          <SignIn>登录</SignIn>
          <BarButton aria-label="即将推出" $w={46}>
            <Ico w={18} h={18} c="#fff" sw={1.2}>
              <path d="M9.500 4.500l4 3L7 16l-5.500.5 1-4.500zM7 16c2 1 3.500-.5 3-4M11.500 2.800L11 .5M13.500 3.800L16 1M14.500 6.300l2.800-.6" />
            </Ico>
          </BarButton>
          <BarButton aria-label="功能区显示选项" $w={46}>
            <Ico w={13} h={11} c="#fff"><path d="M.5.500h12v10H.5zM.5 2.500h12M6.500 9V4.500M4.500 6.500l2-2 2 2" /></Ico>
          </BarButton>
          <BarButton aria-label="最小化" $w={46}>
            <Ico w={11} h={11} c="#fff"><path d="M0 5.500h11" /></Ico>
          </BarButton>
          <BarButton aria-label="最大化" $w={46}>
            <Ico w={11} h={11} c="#fff"><path d="M.5.5h10v10H.5z" /></Ico>
          </BarButton>
          <CloseWindow aria-label="关闭">
            <Ico w={11} h={11} c="#fff" sw={1.1}><path d="M.5.5l10 10M10.500.5l-10 10" /></Ico>
          </CloseWindow>
        </TitleRight>
      </TitleBar>

      <TabBar>
        {TABS.map((t) => (
          <Tab key={t} $on={t === "开始"}>{t}</Tab>
        ))}
        <TabActions>
          <ActionButton $w={60}>
            <Ico w={12} h={12} c={GREEN}><path d="M.5 1.500h11v7H5L2.500 11V8.500h-2z" /></Ico>
            批注
          </ActionButton>
          <ActionButton $w={71}>
            <Ico w={12} h={12} c={GREEN}><path d="M4 3.500H.5v8h9V9M3 8c.5-3 2-4 5-4V1.500l3.500 3.500L8 8.500V6C5.500 6 4 6.500 3 8z" /></Ico>
            共享
            <Drop as="span" $gap={4}><Chevron c={GREEN} /></Drop>
          </ActionButton>
        </TabActions>
      </TabBar>

      <Ribbon>
        <RibbonGroup name="剪贴板" w={93} pad={5} launch>
          <Big w={40} icon={<PasteIcon />} top="粘贴" drop />
          <Stack>
            <Line $h={23}><Tool aria-label="剪切"><CutIcon /></Tool></Line>
            <Line $h={23}><Tool aria-label="复制"><CopyIcon /></Tool><DropDown /></Line>
            <Line $h={23}><Tool aria-label="格式刷"><PainterIcon /></Tool></Line>
          </Stack>
        </RibbonGroup>

        <RibbonGroup name="字体" w={277} pad={6} launch>
          <Stack>
            <Line $pad={1}>
              <Picker w={172} value="等线" label="字体" gap={2} />
              <Picker w={40} value="11" label="字号" gap={2} />
              <Tool aria-label="增大字号"><SizeIcon up /></Tool>
              <Tool aria-label="减小字号"><SizeIcon /></Tool>
            </Line>
            <Line>
              <Tool><b>B</b></Tool>
              <Tool aria-label="倾斜"><Ico w={8} h={12} sw={1.1}><path d="M3.500.8H8M0 10.800h4.500M5.700 1L2.300 10.500" /></Ico></Tool>
              <Tool><u>U</u></Tool>
              <DropDown />
              <Rule />
              <Tool aria-label="边框"><BorderIcon /></Tool>
              <DropDown />
              <Rule />
              <Tool aria-label="填充颜色"><FillIcon /></Tool>
              <DropDown />
              <Tool aria-label="字体颜色" $w={30}><FontColor /></Tool>
              <DropDown />
              <Rule />
              <Tool $w={30}><PinyinMark>wén<PinyinHan>文</PinyinHan></PinyinMark></Tool>
              <DropDown />
            </Line>
          </Stack>
        </RibbonGroup>

        <RibbonGroup name="对齐方式" w={255} pad={7} launch>
          <AlignGrid>
            <Tool aria-label="顶端对齐"><Bars rows={[[1, 15, 1], [4, 12, 5], [1, 15, 10]]} /></Tool>
            <Tool aria-label="垂直居中" $on><Bars rows={[[1, 15, 4], [4, 12, 8], [1, 15, 12]]} /></Tool>
            <Tool aria-label="底端对齐"><Bars rows={[[1, 15, 8], [4, 12, 12], [1, 15, 16]]} /></Tool>
            <Tool aria-label="左对齐"><Bars rows={[[1, 15, 2], [1, 11, 6], [1, 15, 10], [1, 11, 14]]} /></Tool>
            <Tool aria-label="居中"><Bars rows={[[1, 15, 2], [3, 13, 6], [1, 15, 10], [3, 13, 14]]} /></Tool>
            <Tool aria-label="右对齐"><Bars rows={[[1, 15, 2], [5, 15, 6], [1, 15, 10], [5, 15, 14]]} /></Tool>
          </AlignGrid>
          <Rule $h={56} $l={3} />
          <Stack>
            <Line><Tool aria-label="方向"><OrientIcon /></Tool><DropDown /></Line>
            <Line><Tool aria-label="减少缩进"><IndentIcon out /></Tool><Tool aria-label="增加缩进"><IndentIcon /></Tool></Line>
          </Stack>
          <Rule $h={56} $l={3} />
          <Stack>
            <Line $pad={4}><LabelTool><WrapIcon /><ToolText>自动换行</ToolText></LabelTool></Line>
            <Line $pad={4}><LabelTool><MergeIcon /><ToolText>合并后居中</ToolText></LabelTool><DropDown gap={7} /></Line>
          </Stack>
        </RibbonGroup>

        <RibbonGroup name="数字" w={156} pad={7} launch>
          <Stack>
            <Line $pad={1}><Picker w={140} value="常规" label="数字格式" /></Line>
            <Line>
              <Tool aria-label="会计数字格式"><CurrencyIcon /></Tool>
              <DropDown />
              <Tool aria-label="百分比" $w={30}><PercentIcon /></Tool>
              <Tool aria-label="千位分隔" $w={20}><CommaIcon /></Tool>
              <Rule $l={3} />
              <Tool aria-label="增加小数位数"><DecimalIcon more /></Tool>
              <Tool aria-label="减少小数位数"><DecimalIcon /></Tool>
            </Line>
          </Stack>
        </RibbonGroup>

        <RibbonGroup name="样式" w={199} pad={5}>
          <Big w={58} icon={<CondIcon />} top="条件格式" drop />
          <Big w={60} icon={<TableStyleIcon />} top="套用" bottom="表格格式" drop />
          <Big w={70} icon={<CellStyleIcon />} top="单元格样式" drop />
        </RibbonGroup>

        <RibbonGroup name="单元格" w={85} pad={11}>
          <Stack>
            <Line $h={23}><LabelTool $gap={2}><InsertCells /><ToolText>插入</ToolText></LabelTool><DropDown gap={7} /></Line>
            <Line $h={23}><LabelTool $gap={2}><DeleteCells /><ToolText>删除</ToolText></LabelTool><DropDown gap={7} /></Line>
            <Line $h={23}><LabelTool $gap={2}><FormatCells /><ToolText>格式</ToolText></LabelTool><DropDown gap={1} /></Line>
          </Stack>
        </RibbonGroup>

        <RibbonGroup name="编辑" w={184} pad={7}>
          <Stack>
            <Line $h={23}><Tool aria-label="自动求和"><SumIcon /></Tool><DropDown /></Line>
            <Line $h={23}><Tool aria-label="填充"><FillDown /></Tool><DropDown /></Line>
            <Line $h={23}><Tool aria-label="清除"><Eraser /></Tool><DropDown /></Line>
          </Stack>
          <Big w={68} icon={<SortIcon />} top="排序和筛选" drop />
          <Big w={62} icon={<FindIcon />} top="查找和选择" drop />
        </RibbonGroup>

        <RibbonGroup name="分析" w={58} pad={0}>
          <Big w={58} icon={<AnalyzeIcon />} top="分析" bottom="数据" />
        </RibbonGroup>
        <RibbonGroup name="保存" w={69} pad={0}>
          <Big w={68} icon={<CloudDisk />} top="保存到" bottom="百度网盘" />
        </RibbonGroup>
        <Collapse aria-label="折叠功能区">
          <Ico w={9} h={5} sw={1.3}><path d="M.5 4.500l4-4 4 4" /></Ico>
        </Collapse>
      </Ribbon>

      <Notice>
        <InfoIcon />
        <NoticeTitle>产品通知</NoticeTitle>
        <NoticeText>Excel 未激活。若要无中断地继续使用 Excel，请在 2023年2月20日 之前激活。</NoticeText>
        <Activate>激活(<u>A</u>)</Activate>
        <NoticeClose aria-label="关闭通知">
          <Ico w={9} h={8} c="#605e5c" sw={2}><path d="M1 .5l7 7M8 .5l-7 7" /></Ico>
        </NoticeClose>
      </Notice>

      <FormulaRow>
        <Field $w={102}>
          <FieldInput defaultValue="I10" aria-label="名称框" size={6} />
          <FieldButton $w={20} aria-label="名称列表"><Pointer d="M0 0h8L4 5z" w={8} h={5} c="#777" /></FieldButton>
        </Field>
        <Grip $w={30}><Dots /></Grip>
        <Field $w={110}>
          <FieldButton $w={36} aria-label="取消"><Ico w={12} h={11} c="#bdbdbd" sw={1.6}><path d="M1 .5l10 10M11 .5l-10 10" /></Ico></FieldButton>
          <FieldButton $w={36} aria-label="输入"><Ico w={13} h={11} c="#bdbdbd" sw={2}><path d="M1 6l4 4L12 1" /></Ico></FieldButton>
          <FieldButton $w={36} aria-label="插入函数">
            <Ico w={13} h={14} c="#444" sw={1.2}><path d="M8.500 1.500C6.500.3 5.500 2 5 4.500l-1 5c-.5 2.500-1.500 3.500-3.500 2.500M2.500 5h5M7 8c2-.5 2 4 5 3.500M12.500 7.500L7 12" /></Ico>
          </FieldButton>
        </Field>
        <Grip $w={3} />
        <Field>
          <FieldInput aria-label="编辑栏" />
          <FieldButton $w={8} aria-label="展开编辑栏"><Chevron w={8} c="#605e5c" sw={2} /></FieldButton>
        </Field>
      </FormulaRow>

      <Work>
        <SheetArea>
          <Sheet>
            <colgroup>
              <col width={25} />
              {COLS.map((c) => <col key={c} width={72} />)}
              <col />
            </colgroup>
            <thead>
              <tr>
                <Corner><Pointer d="M11 0v11H0z" w={14} h={13} c="#b4b4b4" /></Corner>
                {COLS.map((c) => <ColHead key={c} scope="col" $on={c === "I"}>{c}</ColHead>)}
                <ColHead as="td" />
              </tr>
            </thead>
            <tbody>
              {Array.from({ length: 30 }, (_, r) => (
                <tr key={r}>
                  <RowHead scope="row" $on={r === 9}>{r + 1}</RowHead>
                  {COLS.map((c, i) => {
                    const v = DATA[r]?.[i];
                    return (
                      <Cell key={c} $box={v !== undefined} $num={typeof v === "number"} $hot={typeof v === "number" && v > 95}>
                        {v}
                        {r === 9 && c === "I" && <Selection />}
                      </Cell>
                    );
                  })}
                  <Cell />
                </tr>
              ))}
            </tbody>
          </Sheet>
        </SheetArea>
        <VScroll>
          <VArrow aria-label="向上"><Pointer d="M0 5L5 0v5z" w={5} h={5} /></VArrow>
          <VTrack />
          <VArrow aria-label="向下"><Pointer d="M0 0h5v5z" w={5} h={5} /></VArrow>
        </VScroll>
        <Arrow width="50" height="110" viewBox="0 0 50 110">
          <defs>
            <filter id="shade" x="-50%" y="-20%" width="200%" height="140%">
              <feDropShadow dx="2" dy="2" stdDeviation="1.500" floodColor="#000" floodOpacity=".6" />
            </filter>
          </defs>
          <path d="M8 4l15 24-5 .5L39 99l-3.500 1L15 29.500l-5 1.500z" fill="#f00f0f" stroke="#b01010" strokeWidth=".5" filter="url(#shade)" />
        </Arrow>
      </Work>

      <SheetBar>
        <NavArrows>
          <Pointer d="M5 0v8L0 4z" c="#c0c0c0" />
          <Pointer d="M0 0v8l5-4z" c="#c0c0c0" />
        </NavArrows>
        <SheetTab $on>Sheet1</SheetTab>
        <SheetTab>Sheet3</SheetTab>
        <AddSheet aria-label="新工作表">
          <Ico w={17} h={17} c="#777"><circle cx="8.500" cy="8.500" r="7.500" /><path d="M8.500 4.500v8M4.500 8.500h8" strokeWidth="1.600" /></Ico>
        </AddSheet>
        <BarGrip><Dots /></BarGrip>
        <HScroll>
          <HBox $w={15} aria-label="向左"><Pointer d="M4 0v8L0 4z" w={4} /></HBox>
          <HThumb />
          <HBox $w={15} aria-label="向右"><Pointer d="M0 0v8l4-4z" w={4} /></HBox>
        </HScroll>
      </SheetBar>

      <StatusBar>
        <span>就绪</span>
        <A11y><A11yIcon />辅助功能: 调查</A11y>
        <Views>
          <ViewButton $on aria-label="普通"><Ico w={13} h={13}><path d="M.5.5h12v12H.5zM4.500.5v12M8.500.5v12M.5 4.500h12M.5 8.500h12" /></Ico></ViewButton>
          <ViewButton aria-label="页面布局"><Ico w={13} h={13}><path d="M.5.5h12v12H.5zM3.500 2.500h6v8h-6zM5 4.500h3M5 6.500h3M5 8.500h3" /></Ico></ViewButton>
          <ViewButton aria-label="分页预览"><Ico w={14} h={13}><path d="M.5.5h13v12H.5zM4.500.5v7M9.500.5v7M.5 7.500h9" /></Ico></ViewButton>
        </Views>
        <ZoomPart>
          <button aria-label="缩小"><Ico w={9} h={9}><path d="M0 4.500h8" /></Ico></button>
          <Range type="range" aria-label="显示比例" min={10} max={190} defaultValue={100} />
          <button aria-label="放大"><Ico w={9} h={9}><path d="M0 4.500h9M4.500 0v9" /></Ico></button>
          <ZoomText>100%</ZoomText>
        </ZoomPart>
        <OsMark>激活 Windows</OsMark>
      </StatusBar>

      <SiteMark>
        <svg width="82" height="44" viewBox="0 0 82 44" aria-hidden="true">
          <defs>
            <linearGradient id="sky" x1="0" y1="1" x2="1" y2="0">
              <stop offset="0" stopColor="#2f62ad" />
              <stop offset="1" stopColor="#6fc0ea" />
            </linearGradient>
            <linearGradient id="leaf" x1="0" y1="1" x2="1" y2="0">
              <stop offset="0" stopColor="#cfe04a" />
              <stop offset="1" stopColor="#2fa35a" />
            </linearGradient>
          </defs>
          <path d="M4 42L34 12 66 2 40 16z" fill="#fff" opacity=".6" />
          <path d="M76 4C58 1 40 10 38 24c-.5 5 3 9 9 10-4-4-2-10 3-14C55 13 64 7 76 4z" fill="url(#sky)" />
          <path d="M51 26c2-7 8-12 16-12-5 2-8 5-8 8 3-1 6 0 6 2-3 0-6 5-10 5-3 0-4-1-4-3z" fill="#4d93d6" />
          <path d="M40 42c12 1 22-3 26-9 3-4 3-10-1-14 8 0 14 5 12 12C73 40 54 46 40 42z" fill="url(#leaf)" />
        </svg>
        <SiteText>
          <SiteName>极光下载站</SiteName>
          <SiteUrl>www.xz7.com</SiteUrl>
        </SiteText>
      </SiteMark>
    </Shell>
  );
}
